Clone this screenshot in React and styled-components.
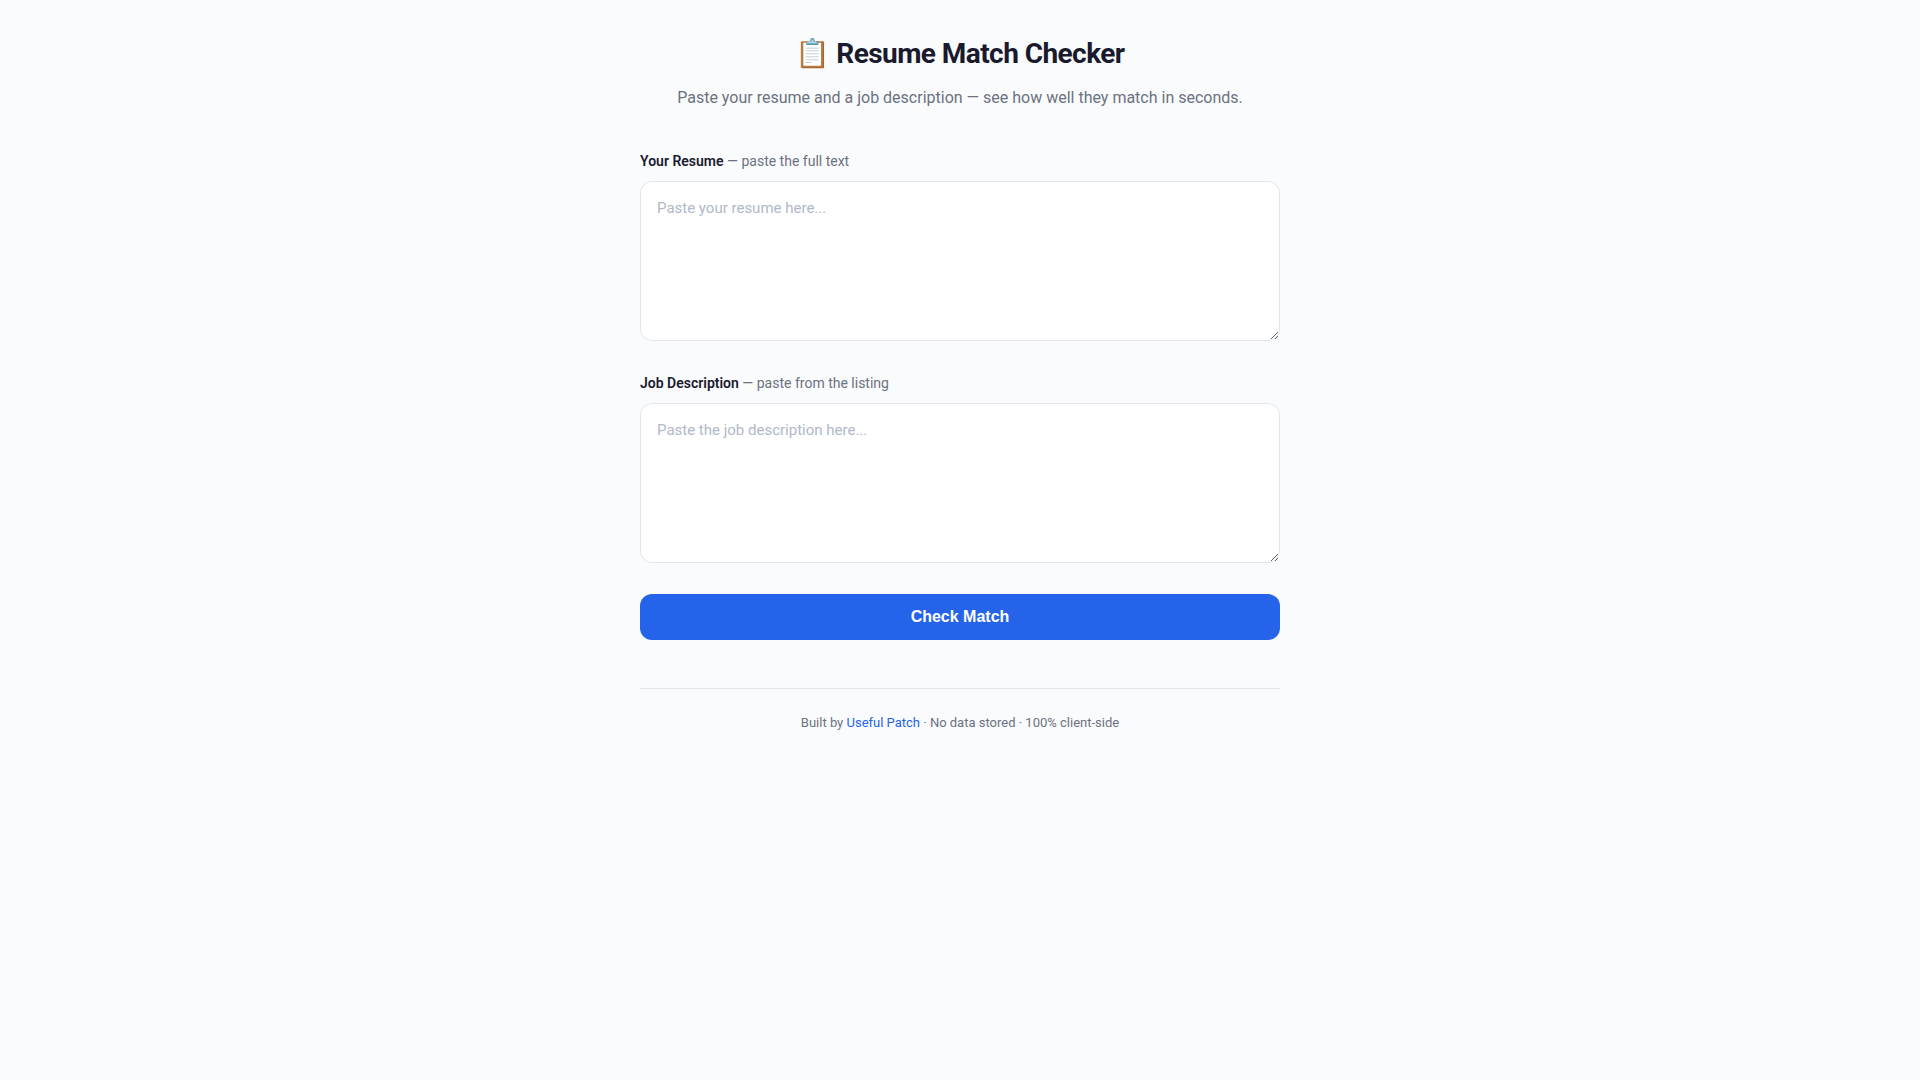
import React, { useState } from 'react';
import styled, { createGlobalStyle } from 'styled-components';

const GlobalStyle = createGlobalStyle`
    * {
        margin: 0;
        padding: 0;
        box-sizing: border-box;
    }

    body {
        background: #fafbfd;
        color: #1a1a2e;
        font-family: Roboto, sans-serif;
        line-height: 1.6;
    }
`;

const Container = styled.div`
    max-width: 680px;
    margin: 0 auto;
    padding: 32px 20px;
`;

const Header = styled.header`
    text-align: center;
    margin-bottom: 40px;
`;

const Title = styled.h1`
    font-size: 28px;
    font-weight: 700;
    letter-spacing: -0.02em;
    margin-bottom: 8px;
`;

const Subtitle = styled.p`
    color: #6b7280;
    font-size: 16px;
`;

const Field = styled.div`
    margin-bottom: 24px;
`;

const Label = styled.label`
    display: block;
    font-size: 14px;
    font-weight: 600;
    margin-bottom: 8px;
`;

const Hint = styled.span`
    color: #6b7280;
    font-weight: 400;
`;

const TextArea = styled.textarea`
    width: 100%;
    min-height: 160px;
    padding: 14px 16px;
    border: 1px solid #e2e5ea;
    border-radius: 12px;
    background: #fff;
    color: #1a1a2e;
    font-family: inherit;
    font-size: 15px;
    line-height: 1.6;
    resize: vertical;

    &::placeholder {
        color: #b0b8c9;
    }

    &:focus {
        outline: none;
        border-color: #2563eb;
    }
`;

const Button = styled.button`
    width: 100%;
    padding: 14px;
    border: none;
    border-radius: 12px;
    background: #2563eb;
    color: #fff;
    font-family: "Liberation Sans", Arial, sans-serif;
    font-size: 16px;
    font-weight: 600;
    cursor: pointer;

    &:hover {
        background: #1d4ed8;
    }
`;

const Footer = styled.footer`
    margin-top: 48px;
    padding-top: 24px;
    border-top: 1px solid #e2e5ea;
    color: #6b7280;
    font-size: 13px;
    text-align: center;
`;

const Link = styled.a`
    color: #2563eb;
    text-decoration: none;
`;

const App = () => {
    const [resume, setResume] = useState('');
    const [job, setJob] = useState('');

    return (
        <>
            <GlobalStyle />
            <Container>
                <Header>
                    <Title>📋 Resume Match Checker</Title>
                    <Subtitle>Paste your resume and a job description — see how well they match in seconds.</Subtitle>
                </Header>

                <main>
                    <Field>
                        <Label htmlFor="resume">Your Resume <Hint>— paste the full text</Hint></Label>
                        <TextArea
                            id="resume"
                            placeholder="Paste your resume here..."
                            value={resume}
                            onChange={e => setResume(e.target.value)}
                        />
                    </Field>
                    <Field>
                        <Label htmlFor="job">Job Description <Hint>— paste from the listing</Hint></Label>
                        <TextArea
                            id="job"
                            placeholder="Paste the job description here..."
                            value={job}
                            onChange={e => setJob(e.target.value)}
                        />
                    </Field>
                    <Button type="button">Check Match</Button>
                </main>

                <Footer>
                    Built by <Link href="#">Useful Patch</Link> · No data stored · 100% client-side
                </Footer>
            </Container>
        </>
    );
}

export default App;
